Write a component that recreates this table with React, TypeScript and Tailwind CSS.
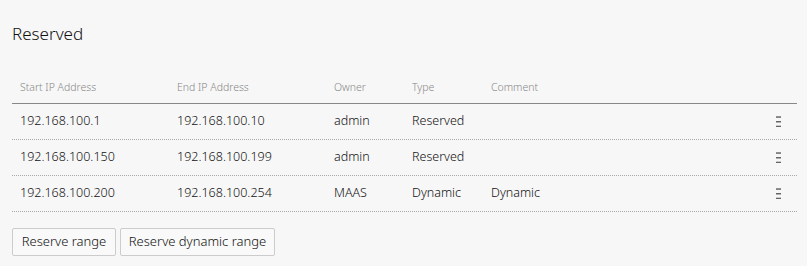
import React from "react";

type Range = {
  start: string;
  end: string;
  owner: string;
  type: string;
  comment: string;
};

const ranges: Range[] = [
  { start: "192.168.100.1", end: "192.168.100.10", owner: "admin", type: "Reserved", comment: "" },
  { start: "192.168.100.150", end: "192.168.100.199", owner: "admin", type: "Reserved", comment: "" },
  { start: "192.168.100.200", end: "192.168.100.254", owner: "MAAS", type: "Dynamic", comment: "Dynamic" },
];

function MenuIcon() {
  return (
    <svg width="5" height="11" viewBox="0 0 5 11" className="block">
      <rect x="0" y="0.3" width="5" height="1.5" fill="#666" />
      <rect x="0" y="5" width="5" height="1.5" fill="#666" />
      <rect x="0" y="9.7" width="5" height="1.5" fill="#666" />
    </svg>
  );
}

export default function App() {
  return (
    <div
      className="w-[807px] h-[266px] bg-[#f7f7f7] px-3 text-[#111]"
      style={{ fontFamily: '"Noto Sans", "Open Sans", sans-serif' }}
    >
      <div className="h-[72px] pt-[22px]">
        <h2 className="text-[17px] leading-6 font-light text-[#111]">Reserved</h2>
      </div>
      <div className="w-[785px]">
        <div className="flex h-8 items-center border-b border-[#888] text-[10.5px] font-light text-[#888]">
          <div className="w-[157px] px-2">Start IP Address</div>
          <div className="w-[157px] px-2">End IP Address</div>
          <div className="w-[78px] px-2">Owner</div>
          <div className="w-[79px] px-2">Type</div>
          <div className="flex-1 px-2">Comment</div>
        </div>
        {ranges.map((r) => (
          <div
            key={r.start}
            className="flex h-9 items-center border-b border-dotted border-[#aaa] text-[12.5px] font-light"
          >
            <div className="w-[157px] px-2">{r.start}</div>
            <div className="w-[157px] px-2">{r.end}</div>
            <div className="w-[78px] px-2">{r.owner}</div>
            <div className="w-[79px] px-2">{r.type}</div>
            <div className="flex-1 px-2">{r.comment}</div>
            <div className="w-[21px] flex justify-start">
              <MenuIcon />
            </div>
          </div>
        ))}
      </div>
      <div className="mt-4 flex gap-1">
        <button className="h-7 w-[104px] rounded-[2px] border border-[#ccc] bg-[#f9f9f9] text-[13px] font-light text-[#111]">
          Reserve range
        </button>
        <button className="h-7 w-[155px] rounded-[2px] border border-[#ccc] bg-[#f9f9f9] text-[13px] font-light text-[#111]">
          Reserve dynamic range
        </button>
      </div>
    </div>
  );
}
